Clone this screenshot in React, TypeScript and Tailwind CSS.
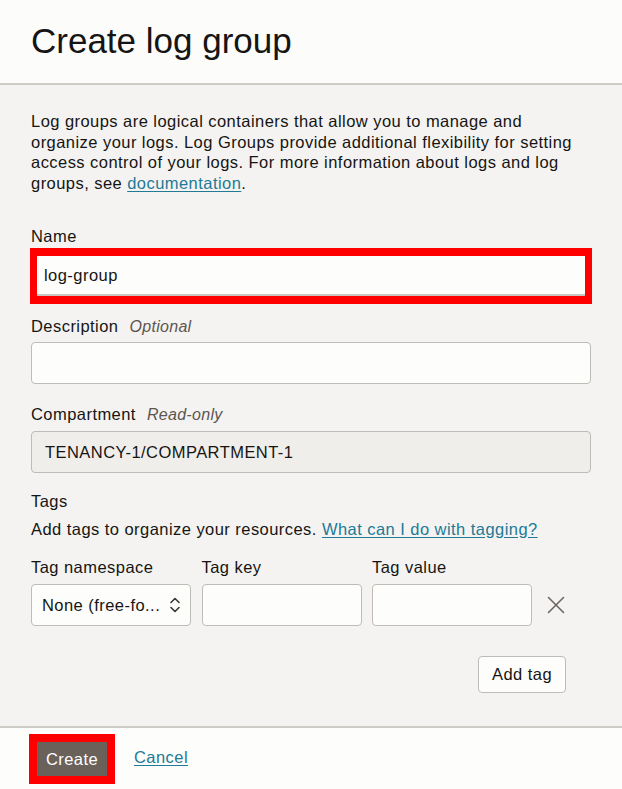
import React from "react";

const txt = "text-[16.5px] leading-[20.7px] tracking-[0.45px]";

function Label({ children, hint }: { children: React.ReactNode; hint?: string }) {
  return (
    <div className={`${txt} flex items-baseline`}>
      <span>{children}</span>
      {hint && <span className="ml-[11px] italic text-[16px] tracking-[0.3px] text-[#5b5650]">{hint}</span>}
    </div>
  );
}

export default function App() {
  return (
    <div className="w-[622px] h-[789px] flex flex-col bg-[#f4f3f1] text-[#161513] font-['Liberation_Sans',Arial,sans-serif] overflow-hidden">
      <header className="h-[85px] shrink-0 bg-[#fcfcfb] border-b-2 border-[#cfccc8] pl-[31px] pt-[21px]">
        <h1 className="text-[35px] leading-[40px] font-normal">Create log group</h1>
      </header>

      <main className="flex-1 px-[31px] pt-[26px] flex flex-col">
        <p className={txt}>
          Log groups are logical containers that allow you to manage and organize your logs. Log Groups provide
          additional flexibility for setting access control of your logs. For more information about logs and log
          groups, see <a className="text-[#227a97] underline underline-offset-2">documentation</a>.
        </p>

        <div className="mt-[32px]">
          <Label>Name</Label>
        </div>
        <div className="mt-[1px] -mx-px border-[8px] border-[#ff0000] border-x-[7px]">
          <div className={`h-[40px] bg-[#fdfdfb] border-b-2 border-[#c9c6c1] flex items-center pl-[7px] pt-[2px] ${txt}`}>
            log-group
          </div>
        </div>

        <div className="mt-[12px]">
          <Label hint="Optional">Description</Label>
        </div>
        <div className="mt-[5px] h-[42px] bg-[#fdfdfb] border border-[#bfbbb6] rounded-[4px]" />

        <div className="mt-[20px]">
          <Label hint="Read-only">Compartment</Label>
        </div>
        <div className={`mt-[5px] h-[42px] bg-[#efeeeb] border border-[#bfbbb6] rounded-[4px] flex items-center pl-[13px] ${txt}`}>
          TENANCY-1/COMPARTMENT-1
        </div>

        <div className="mt-[18px]">
          <Label>Tags</Label>
        </div>
        <p className={`mt-[7px] ${txt}`}>
          Add tags to organize your resources.{" "}
          <a className="text-[#227a97] underline underline-offset-2">What can I do with tagging?</a>
        </p>

        <div className={`mt-[18px] flex gap-[10.5px] ${txt}`}>
          <span className="w-[160px]">Tag namespace</span>
          <span className="w-[160px]">Tag key</span>
          <span className="w-[160px]">Tag value</span>
        </div>
        <div className="mt-[6px] flex items-center gap-[10.5px]">
          <div className={`w-[160px] h-[42px] bg-[#fdfdfb] border border-[#bfbbb6] rounded-[4px] flex items-center justify-between pl-[10px] pr-[9px] ${txt}`}>
            <span>None (free-fo...</span>
            <svg width="12" height="18" viewBox="0 0 12 18" fill="none" stroke="#3b3733" strokeWidth="1.6" strokeLinecap="round" strokeLinejoin="round">
              <path d="M2 6.5 L6 2.5 L10 6.5" />
              <path d="M2 11.5 L6 15.5 L10 11.5" />
            </svg>
          </div>
          <div className="w-[160px] h-[42px] bg-[#fdfdfb] border border-[#bfbbb6] rounded-[4px]" />
          <div className="w-[160px] h-[42px] bg-[#fdfdfb] border border-[#bfbbb6] rounded-[4px]" />
          <svg className="ml-[3px]" width="20" height="20" viewBox="0 0 20 20" fill="none" stroke="#6b6661" strokeWidth="1.6" strokeLinecap="round">
            <path d="M2.5 2.5 L17.5 17.5" />
            <path d="M17.5 2.5 L2.5 17.5" />
          </svg>
        </div>

        <div className="mt-[30px] flex justify-end pr-[25px]">
          <button className={`h-[37px] w-[88px] bg-[#fdfdfb] border border-[#bfbbb6] rounded-[4px] ${txt}`}>Add tag</button>
        </div>
      </main>

      <footer className="h-[63px] shrink-0 bg-[#fdfdfc] border-t-2 border-[#cfccc8] pl-[29px] pt-[6px] flex items-start">
        <div className="border-[8px] border-[#ff0000]">
          <button className={`h-[34px] w-[70px] bg-[#6a615b] text-white ${txt} flex items-center justify-center`}>Create</button>
        </div>
        <a className={`ml-[19px] mt-[13px] text-[#227a97] underline underline-offset-2 ${txt}`}>Cancel</a>
      </footer>
    </div>
  );
}
